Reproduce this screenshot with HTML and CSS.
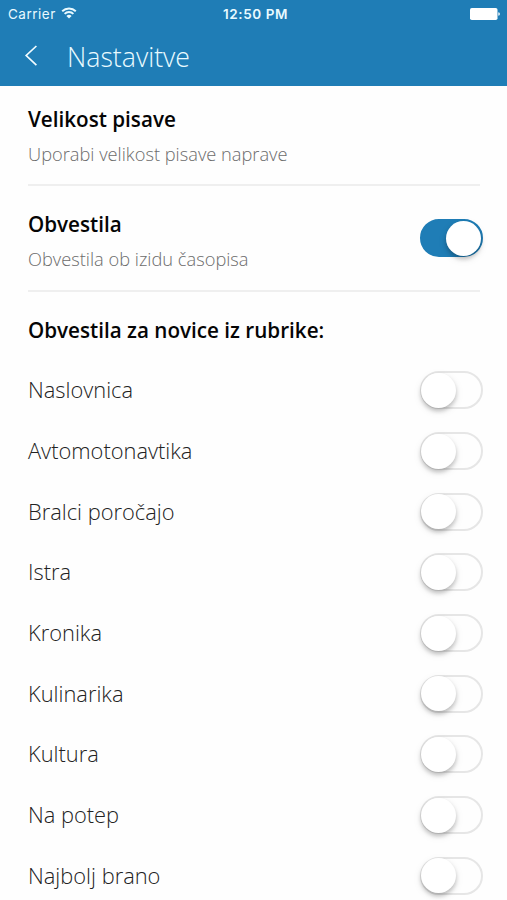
FILE: index.html
```html
<!DOCTYPE html>
<html lang="sl">
<head>
<meta charset="utf-8">
<title>Nastavitve</title>
<link rel="stylesheet" href="styles.css">
</head>
<body>
<header class="header">
  <div class="status">
    <div class="status-left"><span class="carrier">Carrier</span>
      <svg class="wifi" width="16" height="12" viewBox="0 0 16 12" fill="none" stroke="#e9faff" stroke-width="1.9"><path d="M1.2 4.3a9.7 9.7 0 0 1 13.6 0M3.6 6.9a6.2 6.2 0 0 1 8.8 0"/><path d="M5.4 9a3.7 3.7 0 0 1 5.2 0L8 11.6z" fill="#e9faff" stroke="none"/></svg>
    </div>
    <span class="clock">12:50 PM</span>
    <svg class="battery" width="31" height="12" viewBox="0 0 31 12" fill="#fff"><rect width="27.5" height="12" rx="1.8"/><path d="M28.3 4.2q1.6.3 1.6 1.8t-1.6 1.8z"/></svg>
  </div>
  <div class="nav">
    <svg class="back" width="14" height="22" viewBox="0 0 14 22" fill="none" stroke="#f2fcff" stroke-width="1.7"><path d="M12.4 1 2.2 10.5l10.2 9.7"/></svg>
    <h1 class="title">Nastavitve</h1>
  </div>
</header>
<main class="content">
  <section class="setting setting-size">
    <div><h2 class="heading">Velikost pisave</h2><p class="note">Uporabi velikost pisave naprave</p></div>
  </section>
  <section class="setting setting-alerts">
    <div><h2 class="heading">Obvestila</h2><p class="note">Obvestila ob izidu časopisa</p></div>
    <span class="switch switch-on"><span class="knob"></span></span>
  </section>
  <h2 class="heading group-heading">Obvestila za novice iz rubrike:</h2>
  <ul class="list">
    <li class="row"><span class="label">Naslovnica</span><span class="switch"><span class="knob"></span></span></li>
    <li class="row"><span class="label">Avtomotonavtika</span><span class="switch"><span class="knob"></span></span></li>
    <li class="row"><span class="label">Bralci poročajo</span><span class="switch"><span class="knob"></span></span></li>
    <li class="row"><span class="label">Istra</span><span class="switch"><span class="knob"></span></span></li>
    <li class="row"><span class="label">Kronika</span><span class="switch"><span class="knob"></span></span></li>
    <li class="row"><span class="label">Kulinarika</span><span class="switch"><span class="knob"></span></span></li>
    <li class="row"><span class="label">Kultura</span><span class="switch"><span class="knob"></span></span></li>
    <li class="row"><span class="label">Na potep</span><span class="switch"><span class="knob"></span></span></li>
    <li class="row"><span class="label">Najbolj brano</span><span class="switch"><span class="knob"></span></span></li>
  </ul>
</main>
</body>
</html>
```
FILE: styles.css
```css
* { box-sizing: border-box; }
html, body { height: 100%; }
body {
  margin: 0;
  height: 900px;
  overflow: hidden;
  background: #fefefe;
  color: #222;
  font-family: "Open Sans", sans-serif;
}
h1, h2, p, ul { margin: 0; padding: 0; }
.header { height: 86px; background: #1f7db6; color: #e9faff; }
.status {
  display: grid;
  grid-template-columns: 1fr auto 1fr;
  align-items: center;
  height: 27px;
  padding: 0 6px 0 8px;
  font-family: Inter, sans-serif;
  font-size: 13.5px;
}
.status-left { display: flex; align-items: center; gap: 5px; }
.carrier { letter-spacing: 0.5px; }
.wifi { margin-top: -2px; }
.clock { padding-left: 2px; font-weight: 600; letter-spacing: 0.55px; }
.battery { justify-self: end; }
.nav { display: flex; align-items: center; height: 58px; padding-left: 24px; }
.title { margin: 2px 0 0 29px; font-size: 26.7px; font-weight: 300; line-height: 36px; }
.content { padding: 0 27px 0 28px; }
.setting { display: flex; justify-content: space-between; border-bottom: 2px solid #efefef; }
.setting-size { height: 100px; padding-top: 19px; }
.setting-alerts { height: 105.5px; padding-top: 24px; }
.heading { font-size: 20.65px; font-weight: 600; line-height: 28px; color: #050505; white-space: nowrap; }
.note { margin-top: 8px; font-size: 18.25px; font-weight: 300; line-height: 26px; color: #6c6c6c; white-space: nowrap; }
.group-heading { margin-top: 24.5px; height: 44px; }
.list { list-style: none; }
.row {
  display: flex;
  align-items: center;
  justify-content: space-between;
  height: 60.7px;
  font-size: 21.85px;
  font-weight: 300;
}
.label { margin-top: -1px; }
.switch {
  display: flex;
  align-items: center;
  flex: none;
  width: 63px;
  height: 38px;
  margin-right: -3px;
  border: 2px solid #e6e6e6;
  border-radius: 19px;
  background: #fefefe;
}
.knob {
  flex: none;
  width: 35px;
  height: 35px;
  margin-left: -1px;
  border-radius: 50%;
  background: #fff;
  box-shadow: 0 3px 4px rgba(0, 0, 0, 0.22), 0 3px 10px rgba(0, 0, 0, 0.08);
}
.switch-on {
  justify-content: flex-end;
  margin-top: 9px;
  border-color: #1f7db6;
  background: #1f7db6;
}
```
